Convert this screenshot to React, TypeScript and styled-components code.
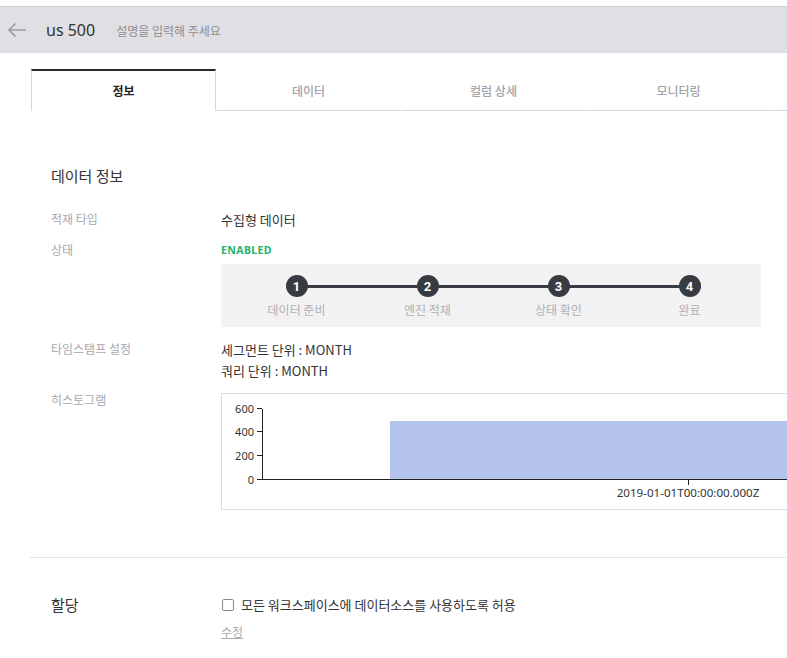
import styled, { createGlobalStyle } from "styled-components";

const GlobalStyle = createGlobalStyle`
  html, body {
    margin: 0;
    padding: 0;
    overflow: hidden;
    background: #fff;
  }
  body {
    font-family: "Noto Sans", "Noto Sans CJK KR", sans-serif;
    color: #333;
  }
`;

const Page = styled.div`
  width: 820px;
  padding-top: 6px;
`;

const Header = styled.header`
  height: 46px;
  border-top: 1px solid #cfcfd4;
  background: #e0dfe4;
  display: flex;
  align-items: center;
  padding-left: 7px;
`;

const BackButton = styled.button`
  border: none;
  background: transparent;
  padding: 0;
  display: flex;
  align-items: center;
  cursor: pointer;
`;

const DataName = styled.span`
  margin-left: 19px;
  font-size: 16px;
  color: #333;
`;

const Description = styled.span`
  margin-left: 21px;
  font-size: 12px;
  color: #8e8e93;
  font-family: "Noto Sans CJK KR", sans-serif;
`;

const TabBar = styled.nav`
  margin: 16px 0 0 31px;
  display: flex;
  border-bottom: 1px solid #d6d6d8;
`;

const Tab = styled.div<{ $active?: boolean }>`
  width: 185px;
  height: 42px;
  box-sizing: border-box;
  display: flex;
  align-items: center;
  justify-content: center;
  font-family: "Noto Sans CJK KR", sans-serif;
  font-size: 12px;
  font-weight: ${(p) => (p.$active ? 700 : 500)};
  color: ${(p) => (p.$active ? "#222" : "#a2a2a7")};
  background: #fff;
  border-top: 2px solid ${(p) => (p.$active ? "#2b2b2b" : "transparent")};
  border-left: 1px solid ${(p) => (p.$active ? "#d6d6d8" : "transparent")};
  border-right: 1px solid ${(p) => (p.$active ? "#d6d6d8" : "transparent")};
  margin-bottom: -1px;
  padding-bottom: ${(p) => (p.$active ? "1px" : "0")};
  ${(p) => (p.$active ? "" : "border-bottom: 1px solid #d6d6d8;")}
`;

const Section = styled.section<{ $top: number }>`
  margin-left: 31px;
  padding: ${(p) => p.$top}px 0 0 20px;
`;

const SectionTitle = styled.h2`
  margin: 0;
  font-size: 15px;
  font-weight: 400;
  line-height: 22px;
  color: #333;
  font-family: "Noto Sans CJK KR", sans-serif;
`;

const Row = styled.div<{ $top: number }>`
  display: grid;
  grid-template-columns: 170px 1fr;
  margin-top: ${(p) => p.$top}px;
  align-items: start;
`;

const Label = styled.div`
  font-size: 12px;
  line-height: 20px;
  color: #a8a8ad;
  font-family: "Noto Sans CJK KR", sans-serif;
`;

const Value = styled.div`
  font-size: 13px;
  line-height: 21px;
  color: #333;
  font-family: "Noto Sans CJK KR", sans-serif;
`;

const Status = styled.div`
  font-size: 10.5px;
  line-height: 20px;
  font-weight: 700;
  color: #1db36a;
  letter-spacing: 0.4px;
`;

const Stepper = styled.div`
  grid-column: 2;
  width: 540px;
  height: 63px;
  box-sizing: border-box;
  margin-top: 4px;
  background: #f2f2f3;
  padding: 11px 0 0 10px;
  display: grid;
  grid-template-columns: repeat(4, 131px);
`;

const Step = styled.div<{ $last?: boolean }>`
  position: relative;
  display: flex;
  flex-direction: column;
  align-items: center;

  &::after {
    content: "";
    display: ${(p) => (p.$last ? "none" : "block")};
    position: absolute;
    left: 50%;
    width: 100%;
    top: 10px;
    height: 3px;
    background: #383b42;
  }
`;

const StepDot = styled.div`
  position: relative;
  z-index: 1;
  width: 22px;
  height: 22px;
  border-radius: 50%;
  background: #383b42;
  color: #fff;
  font-family: Roboto, "Noto Sans", sans-serif;
  font-weight: 700;
  font-size: 13px;
  display: flex;
  align-items: center;
  justify-content: center;
`;

const StepLabel = styled.div`
  margin-top: 4px;
  font-size: 12px;
  line-height: 18px;
  color: #b0b0b4;
  font-family: "Noto Sans CJK KR", sans-serif;
`;

const ChartBox = styled.div`
  margin-top: 3px;
  width: 600px;
  height: 117px;
  box-sizing: border-box;
  border: 1px solid #dcdcde;
  border-right: none;
`;

const Divider = styled.hr`
  margin: 47px 0 0 31px;
  border: none;
  border-top: 1px dotted #c8c8cc;
`;

const AssignTitle = styled.div`
  font-size: 15px;
  line-height: 22px;
  color: #333;
  font-family: "Noto Sans CJK KR", sans-serif;
`;

const CheckRow = styled.label`
  display: flex;
  align-items: center;
  gap: 7px;
  font-size: 13px;
  line-height: 22px;
  color: #333;
  font-family: "Noto Sans CJK KR", sans-serif;
`;

const CheckBox = styled.span`
  width: 10px;
  height: 10px;
  border: 1px solid #8a8a8f;
  border-radius: 2px;
  margin-left: 1px;
`;

const EditLink = styled.a`
  display: inline-block;
  margin-top: 7px;
  font-size: 12px;
  color: #a8a8ad;
  text-decoration: underline;
  font-family: "Noto Sans CJK KR", sans-serif;
`;

const steps = ["데이터 준비", "엔진 적재", "상태 확인", "완료"];

const Histogram = () => {
  const ticks = [
    { v: "600", y: 15 },
    { v: "400", y: 38 },
    { v: "200", y: 62 },
    { v: "0", y: 86 },
  ];
  return (
    <svg width="600" height="115" style={{ display: "block" }}>
      <rect x="168" y="27" width="440" height="59" fill="#b4c3ec" />
      <line x1="40.5" y1="15" x2="40.5" y2="86" stroke="#222" />
      <line x1="40" y1="85.5" x2="600" y2="85.5" stroke="#222" />
      {ticks.map((t) => (
        <g key={t.v}>
          <line x1="35" y1={t.y - 0.5} x2="40" y2={t.y - 0.5} stroke="#222" />
          <text
            x="32"
            y={t.y + 3.5}
            textAnchor="end"
            fontSize="11"
            fill="#333"
            fontFamily="Noto Sans, sans-serif"
          >
            {t.v}
          </text>
        </g>
      ))}
      <line x1="466.5" y1="86" x2="466.5" y2="91" stroke="#222" />
      <text
        x="466"
        y="103"
        textAnchor="middle"
        fontSize="11.6"
        fill="#333"
        fontFamily="Noto Sans, sans-serif"
      >
        2019-01-01T00:00:00.000Z
      </text>
    </svg>
  );
};

const App = () => {
  return (
    <Page>
      <GlobalStyle />
      <Header>
        <BackButton>
          <svg width="20" height="16" viewBox="0 0 20 16">
            <path
              d="M19 8H2M8.5 1.5 2 8l6.5 6.5"
              fill="none"
              stroke="#9a9a9f"
              strokeWidth="1.6"
            />
          </svg>
        </BackButton>
        <DataName>us 500</DataName>
        <Description>설명을 입력해 주세요</Description>
      </Header>

      <TabBar>
        <Tab $active>정보</Tab>
        <Tab>데이터</Tab>
        <Tab>컬럼 상세</Tab>
        <Tab>모니터링</Tab>
      </TabBar>

      <Section $top={54}>
        <SectionTitle>데이터 정보</SectionTitle>
        <Row $top={22}>
          <Label>적재 타입</Label>
          <Value>수집형 데이터</Value>
        </Row>
        <Row $top={10}>
          <Label>상태</Label>
          <Status>ENABLED</Status>
          <Stepper>
            {steps.map((s, i) => (
              <Step key={s} $last={i === steps.length - 1}>
                <StepDot>{i + 1}</StepDot>
                <StepLabel>{s}</StepLabel>
              </Step>
            ))}
          </Stepper>
        </Row>
        <Row $top={12}>
          <Label>타임스탬프 설정</Label>
          <div>
            <Value>세그먼트 단위 : MONTH</Value>
            <Value>쿼리 단위 : MONTH</Value>
          </div>
        </Row>
        <Row $top={9}>
          <Label>히스토그램</Label>
          <ChartBox>
            <Histogram />
          </ChartBox>
        </Row>
      </Section>

      <Divider />

      <Section $top={36}>
        <Row $top={0}>
          <AssignTitle>할당</AssignTitle>
          <div>
            <CheckRow>
              <CheckBox />
              모든 워크스페이스에 데이터소스를 사용하도록 허용
            </CheckRow>
            <EditLink>수정</EditLink>
          </div>
        </Row>
      </Section>
    </Page>
  );
};

export default App;
